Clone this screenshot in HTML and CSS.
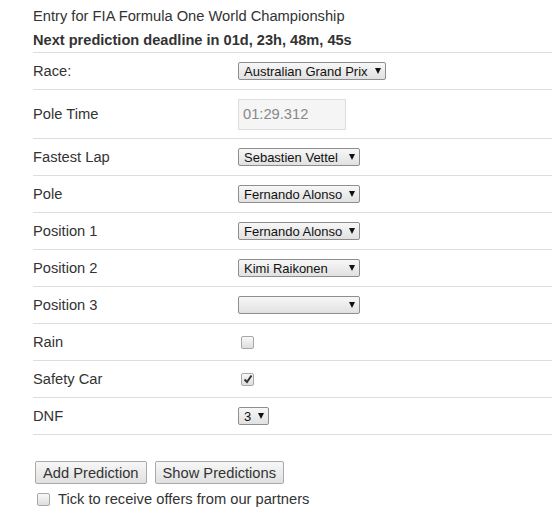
FILE: index.html
```html
<!DOCTYPE html>
<html>
<head>
<meta charset="utf-8">
<link rel="stylesheet" href="styles.css">
</head>
<body>
<div class="page">
  <div class="head">
    <div>Entry for FIA Formula One World Championship</div>
    <div class="bold">Next prediction deadline in 01d, 23h, 48m, 45s</div>
  </div>
  <div class="form">
    <div class="row"><span class="label">Race:</span><span class="sel w148"><span>Australian Grand Prix</span><i class="arr"></i></span></div>
    <div class="row tall"><span class="label">Pole Time</span><span class="input">01:29.312</span></div>
    <div class="row"><span class="label">Fastest Lap</span><span class="sel w122"><span>Sebastien Vettel</span><i class="arr"></i></span></div>
    <div class="row"><span class="label">Pole</span><span class="sel w122"><span>Fernando Alonso</span><i class="arr"></i></span></div>
    <div class="row"><span class="label">Position 1</span><span class="sel w122"><span>Fernando Alonso</span><i class="arr"></i></span></div>
    <div class="row"><span class="label">Position 2</span><span class="sel w122"><span>Kimi Raikonen</span><i class="arr"></i></span></div>
    <div class="row"><span class="label">Position 3</span><span class="sel w122"><span></span><i class="arr"></i></span></div>
    <div class="row"><span class="label">Rain</span><span class="cb cbin"></span></div>
    <div class="row"><span class="label">Safety Car</span><span class="cb cbin"><svg width="10" height="10" viewBox="0 0 10 10"><path d="M1.5 5.5 L4 8 L8.5 1.5" fill="none" stroke="#333" stroke-width="2"/></svg></span></div>
    <div class="row last"><span class="label">DNF</span><span class="sel w31"><span>3</span><i class="arr"></i></span></div>
  </div>
  <div class="buttons">
    <span class="btn">Add Prediction</span>
    <span class="btn">Show Predictions</span>
  </div>
  <div class="offer"><span class="cb"></span><span>Tick to receive offers from our partners</span></div>
</div>
</body>
</html>
```
FILE: styles.css
```css
html, body { margin: 0; padding: 0; background: #fff; }
body {
  font-family: "Liberation Sans", Arial, sans-serif;
  font-size: 14.7px;
  color: #333;
}
.page { padding: 4px 0 0 33px; }
.head { line-height: 24px; }
.bold { font-weight: bold; font-size: 14.6px; }
.form { border-top: 1px solid #ddd; }
.row {
  display: flex;
  align-items: center;
  height: 36px;
  border-bottom: 1px solid #ddd;
}
.row.tall { height: 48px; }
.label { width: 205px; flex: none; }
.sel {
  position: relative;
  display: flex;
  align-items: center;
  box-sizing: border-box;
  height: 18px;
  padding-left: 5px;
  border: 1px solid #8e8e8e;
  border-radius: 2px;
  background: linear-gradient(#f7f7f7, #e1e1e1);
  font-size: 13px;
  color: #111;
  white-space: nowrap;
}
.w148 { width: 148px; }
.w122 { width: 122px; }
.w31 { width: 31px; }
.arr {
  position: absolute;
  right: 4px;
  top: 5px;
  width: 0; height: 0;
  border-left: 3px solid transparent;
  border-right: 3px solid transparent;
  border-top: 6px solid #111;
}
.input {
  box-sizing: border-box;
  width: 108px;
  height: 31px;
  display: flex;
  align-items: center;
  padding-left: 4px;
  border: 1px solid #ddd;
  background: #f5f5f5;
  color: #888;
}
.cb {
  display: inline-flex;
  align-items: center;
  justify-content: center;
  box-sizing: border-box;
  width: 13px;
  height: 13px;
  border: 1px solid #a8a8a8;
  border-radius: 2px;
  background: linear-gradient(#f8f8f8, #dedede);
}
.cbin { margin-left: 3px; }
.buttons {
  display: flex;
  gap: 8px;
  margin-top: 26px;
  padding-left: 2px;
}
.btn {
  box-sizing: border-box;
  height: 23px;
  display: inline-flex;
  align-items: center;
  padding: 0 7px;
  border: 1px solid #a9a9a9;
  border-radius: 2px;
  background: linear-gradient(#f7f7f7, #e0e0e0);
  color: #333;
}
.offer {
  display: flex;
  align-items: center;
  gap: 8px;
  margin-top: 7px;
  padding-left: 4px;
  height: 16px;
}
```
